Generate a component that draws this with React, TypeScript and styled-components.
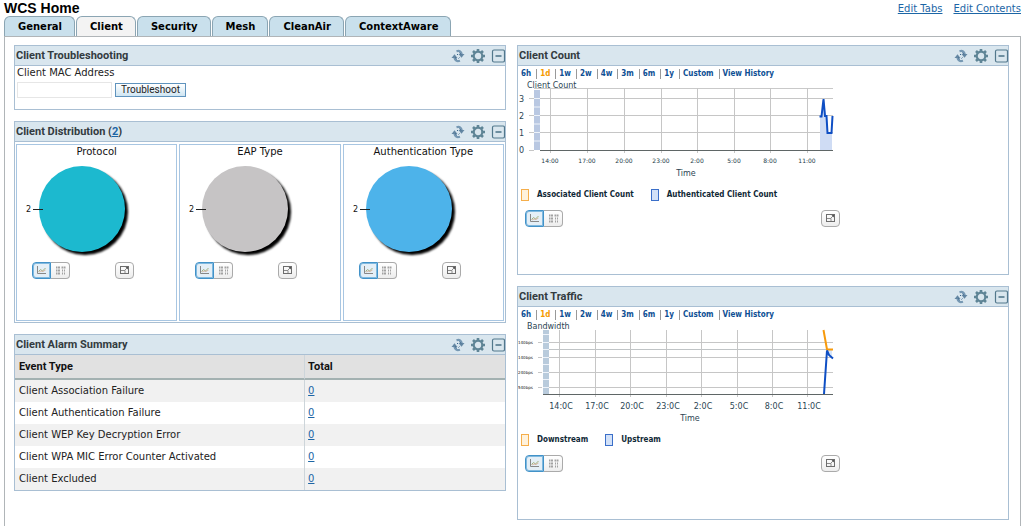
import React from "react";
import styled, { createGlobalStyle } from "styled-components";

const sans = '"DejaVu Sans", "Liberation Sans", sans-serif';
const heading = 'Roboto, "Liberation Sans", sans-serif';
const link = "#1c66a6";
const line = "#a9bfd3";

const GlobalStyle = createGlobalStyle`
  * { box-sizing: border-box; }
  body {
    margin: 0;
    background: #fff;
    color: #222;
    font-family: ${sans};
    font-size: 10px;
  }
  a { color: ${link}; }
  button { font: inherit; padding: 0; margin: 0; cursor: pointer; }
  svg { display: block; }
`;

const Page = styled.div`
  min-height: 100vh;
  display: flex;
  flex-direction: column;
  padding: 0 3px 0 4px;
`;

const TopBar = styled.header`
  display: flex;
  justify-content: space-between;
  height: 16px;
`;

const PageTitle = styled.h1`
  margin: 0;
  font: bold 14px/16px "Liberation Sans", sans-serif;
  color: #000;
`;

const TopLinks = styled.nav`
  display: flex;
  gap: 11px;
  line-height: 17px;
`;

const Tabs = styled.nav`
  display: flex;
  gap: 1px;
`;

const Tab = styled.button<{ $active?: boolean }>`
  height: 20px;
  padding: 0 12px 0 13px;
  border: 1px solid #8ba5b3;
  border-bottom: 0;
  border-radius: 6px 6px 0 0;
  background: ${(p) => (p.$active ? "#f3f3f3" : "#c9e0ec")};
  color: #000;
  font-weight: bold;
  line-height: 18px;
  white-space: nowrap;
`;

const Panel = styled.main`
  flex: 1;
  display: grid;
  grid-template-columns: 1fr 1fr;
  align-items: start;
  gap: 11px;
  padding: 8px 11px 6px 9px;
  border: 1px solid #b0b5b8;
  border-bottom: 0;
`;

const Column = styled.div`
  display: flex;
  flex-direction: column;
  gap: 11px;
  min-width: 0;
`;

const WidgetBox = styled.section`
  border: 1px solid ${line};
  background: #fff;
`;

const WidgetHeader = styled.div`
  display: flex;
  align-items: center;
  justify-content: space-between;
  height: 20px;
  padding: 0 0 0 1px;
  background: #d9e6ee;
  border-bottom: 1px solid ${line};
`;

const WidgetTitle = styled.h2`
  margin: 0;
  font: bold 11px/20px ${heading};
  color: #333b40;
`;

const Tools = styled.div`
  display: flex;
  gap: 6px;
`;

const ToolButton = styled.button`
  width: 14px;
  height: 14px;
  border: 0;
  background: none;
`;

const TroubleForm = styled.form`
  padding: 0 2px 12px;
`;

const FieldLabel = styled.label`
  display: block;
  line-height: 14px;
`;

const FieldRow = styled.div`
  display: flex;
  align-items: center;
  gap: 3px;
  height: 17px;
  padding-top: 2px;
`;

const MacInput = styled.input`
  width: 95px;
  height: 16px;
  border: 1px solid #e6e6e6;
  font: 10px ${sans};
`;

const SubmitButton = styled.button`
  width: 71px;
  height: 14px;
  border: 1px solid #5f93bd;
  background: linear-gradient(#fff, #cfe5f2);
  color: #222;
  font: 10px/12px ${heading};
`;

const PieGrid = styled.div`
  display: grid;
  grid-template-columns: repeat(3, 1fr);
  gap: 2px;
  padding: 2px 1px 1px;
`;

const PieCard = styled.div`
  height: 177px;
  border: 1px solid #a8c6e2;
  min-width: 0;
`;

const PieTitle = styled.h3`
  margin: 0;
  font: 10px/14px ${sans};
  text-align: center;
  color: #111;
`;

const PieControls = styled.div`
  display: flex;
  gap: 45px;
  padding-left: 15px;
`;

const Segment = styled.div`
  display: flex;
`;

const ViewButton = styled.button<{ $on?: boolean; $solo?: boolean }>`
  display: flex;
  align-items: center;
  justify-content: center;
  width: 19px;
  height: 17px;
  border: 1px solid ${(p) => (p.$on ? "#4292c8" : "#aaa")};
  box-shadow: ${(p) => (p.$on ? "inset 0 0 0 1px #80b9df" : "none")};
  border-radius: ${(p) => (p.$solo ? "4px" : p.$on ? "4px 0 0 4px" : "0 4px 4px 0")};
  border-left-width: ${(p) => (p.$on || p.$solo ? "1px" : "0")};
  background: ${(p) => (p.$on ? "#e4eff7" : "linear-gradient(#fff, #ededed)")};
`;

const AlarmTable = styled.table`
  width: 100%;
  border-collapse: separate;
  border-spacing: 0;
  table-layout: fixed;

  th, td {
    height: 22px;
    padding: 0 4px;
    text-align: left;
    line-height: 20px;
  }
  th {
    height: 25px;
    background: #e1e1e1;
    border-bottom: 2px solid #a3b1b1;
    font: bold 11px/20px ${heading};
    color: #111;
  }
  th:first-child { width: 59%; }
  th + th, td + td {
    padding-left: 3px;
    border-left: 1px solid #cdd5da;
  }
  tbody tr:nth-child(odd) { background: #f1f1f1; }
`;

const ChartBody = styled.div`
  padding-bottom: 47px;
`;

const Ranges = styled.nav`
  display: flex;
  align-items: center;
  height: 14px;
  padding-top: 2px;
`;

const RangeLink = styled.a<{ $active?: boolean }>`
  padding: 0 5px 0 3px;
  font: bold 8px/10px "DejaVu Sans Condensed", ${sans};
  color: ${(p) => (p.$active ? "#f59a00" : "#0d4f94")};
  text-decoration: none;
  & + & { border-left: 1px solid #999; }
`;

const Legend = styled.ul<{ $top: number }>`
  display: flex;
  gap: 17px;
  list-style: none;
  margin: ${(p) => p.$top}px 0 0;
  padding: 0 0 0 3px;
`;

const LegendItem = styled.li`
  display: flex;
  align-items: center;
  gap: 8px;
  font: bold 8px/12px "DejaVu Sans Condensed", ${sans};
  color: #102836;
`;

const Swatch = styled.span<{ $edge: string; $fill: string }>`
  width: 8px;
  height: 12px;
  border: 1px solid ${(p) => p.$edge};
  background: ${(p) => p.$fill};
`;

const ChartControls = styled.div`
  display: flex;
  justify-content: space-between;
  width: 322px;
  padding: 9px 0 0 7px;
`;

function RefreshIcon() {
  return (
    <svg width="14" height="14" viewBox="0 0 14 14" fill="none">
      <path d="M5.500 2.300Q10 .8 10.800 5.500" stroke="#7698b3" strokeWidth="2.200" />
      <path d="M7.500 5h6L10.500 8.800z" fill="#6487a3" />
      <path d="M9 11.700Q4.200 13.200 3.400 8.500" stroke="#7698b3" strokeWidth="2.200" />
      <path d="M.5 9h6L3.500 5.200z" fill="#6487a3" />
      <path d="M8.500 3.500l1.500 2M5.500 10.500L4.500 8.500M7 5l-1 1M7.500 9.500l1-1" stroke="#3d678c" />
    </svg>
  );
}

function GearIcon() {
  return (
    <svg width="14" height="14" viewBox="0 0 14 14" stroke="#5f8596" fill="none">
      <path d="M7 0v3M7 11v3M0 7h3M11 7h3M2 2l2.200 2.200M9.800 9.800L12 12M12 2L9.800 4.200M4.200 9.800L2 12" strokeWidth="2.600" />
      <circle cx="7" cy="7" r="4.300" strokeWidth="2.200" />
    </svg>
  );
}

function MinusIcon() {
  return (
    <svg width="14" height="14" viewBox="0 0 14 14" stroke="#52788c" fill="none">
      <rect x="1.500" y="1" width="12" height="12" rx="1.500" strokeWidth="1.200" />
      <path d="M4.500 7h6" strokeWidth="1.600" />
    </svg>
  );
}

function ChartIcon() {
  return (
    <svg width="11" height="9" viewBox="0 0 11 9" fill="none">
      <path d="M1.500 0v7.500H10" stroke="#888" />
      <path d="M2.500 5.500L4.500 3.500 6.500 5 9.500 2" stroke="#9fb27f" />
      <path d="M3 6l2-1 2 .5 2.500-1.500" stroke="#d5a990" strokeWidth=".8" />
    </svg>
  );
}

function GridIcon() {
  return (
    <svg width="11" height="9" viewBox="0 0 11 9" stroke="#a2a2a2" fill="none">
      <path d="M1 1.500h1.500M3 1.500h2M6.500 1.500h1.500M8.500 1.500h2M1 4.500h1.500M3 4.500h2M7 4.500h1M9 4.500h1M1 7.500h1.500M3 7.500h2M7 7.500h1M9 7.500h1" strokeWidth="2" />
    </svg>
  );
}

function ExpandIcon() {
  return (
    <svg width="11" height="9" viewBox="0 0 11 9" fill="none" stroke="#6d6d6d">
      <rect x="1.500" y=".5" width="8" height="7" />
      <path d="M2 4.500h4V7M6 4l2-2" stroke="#8a8a8a" />
      <path d="M6.500 1H9v2.500z" fill="#555" stroke="none" />
    </svg>
  );
}

function Widget({ title, children }: { title: React.ReactNode; children: React.ReactNode }) {
  return (
    <WidgetBox>
      <WidgetHeader>
        <WidgetTitle>{title}</WidgetTitle>
        <Tools>
          <ToolButton type="button" aria-label="Refresh"><RefreshIcon /></ToolButton>
          <ToolButton type="button" aria-label="Settings"><GearIcon /></ToolButton>
          <ToolButton type="button" aria-label="Collapse"><MinusIcon /></ToolButton>
        </Tools>
      </WidgetHeader>
      {children}
    </WidgetBox>
  );
}

function ViewControls() {
  return (
    <>
      <Segment>
        <ViewButton type="button" $on aria-label="Chart view"><ChartIcon /></ViewButton>
        <ViewButton type="button" aria-label="Table view"><GridIcon /></ViewButton>
      </Segment>
      <ViewButton type="button" $solo aria-label="Enlarge"><ExpandIcon /></ViewButton>
    </>
  );
}

function Pie({ title, color }: { title: string; color: string }) {
  const id = "shadow-" + color.slice(1);
  return (
    <PieCard>
      <PieTitle>{title}</PieTitle>
      <svg width="120" height="103" viewBox="0 0 120 103">
        <defs>
          <filter id={id} x="-10%" y="-10%" width="130%" height="130%">
            <feGaussianBlur stdDeviation="1.200" />
          </filter>
        </defs>
        <circle cx="68" cy="53" r="43" fill="#000" filter={`url(#${id})`} />
        <circle cx="65" cy="50" r="43" fill={color} />
        <path d="M16 50.500h10" stroke="#222" />
        <text x="9" y="53" fontSize="8" fill="#111">2</text>
      </svg>
      <PieControls><ViewControls /></PieControls>
    </PieCard>
  );
}

const ranges = ["6h", "1d", "1w", "2w", "4w", "3m", "6m", "1y", "Custom", "View History"];

function RangeBar() {
  return (
    <Ranges>
      {ranges.map((r) => (
        <RangeLink key={r} href="#" $active={r === "1d"}>{r}</RangeLink>
      ))}
    </Ranges>
  );
}

const countTicks: [number, string][] = [
  [32, "14:00"], [69, "17:00"], [106, "20:00"], [143, "23:00"],
  [179, "2:00"], [216, "5:00"], [252, "8:00"], [289, "11:00"],
];

function CountChart() {
  return (
    <svg width="322" height="98" viewBox="0 0 322 98">
      <rect x="16" y="10" width="6" height="60" fill="#b9c8e2" />
      <path d="M16 8.500H315" stroke="#c9c9c9" />
      {[18, 35, 52].map((y, i) => (
        <g key={y}>
          <path d={`M11 ${y + 0.5}h5M22 ${y + 0.5}H315`} stroke="#c6c6c6" />
          <path d={`M16 ${y + 0.5}h6M16 ${y + 9}h6`} stroke="#eef3fa" />
          <text x="1" y={y + 4} fontSize="8" fill="#2b4553">{3 - i}</text>
        </g>
      ))}
      <text x="1" y="73" fontSize="8" fill="#2b4553">0</text>
      {countTicks.map(([x, label]) => (
        <g key={label}>
          <path d={`M${x + 0.5} 8V73`} stroke="#c6c6c6" />
          <text x={x} y="83" fontSize="6" textAnchor="middle" fill="#223a48">{label}</text>
        </g>
      ))}
      <path d="M302 36h2l2-17 2 17h1l1 17h4v17h-12z" fill="#cfdcf4" />
      <path d="M11 70.500h5" stroke="#c6c6c6" />
      <path d="M22 70.500H315" stroke="#5f6666" />
      <path d="M301.500 36.500H303.500L305.500 19 307 36H308.500L309.500 53H313.500L314.500 36" fill="none" stroke="#0f4fc4" strokeWidth="2" />
      <text x="9" y="8" fontSize="8" fill="#2b4553">Client Count</text>
      <text x="168" y="96" fontSize="8" textAnchor="middle" fill="#2b4553">Time</text>
    </svg>
  );
}

const trafficTicks: [number, string][] = [
  [41, "14:0C"], [77, "17:0C"], [112, "20:0C"], [148, "23:0C"],
  [183, "2:0C"], [219, "5:0C"], [254, "8:0C"], [289, "11:0C"],
];

const trafficRows: [number, string][] = [[21, "140bps"], [36, "140bps"], [51, "240bps"], [66, "540bps"]];

function TrafficChart() {
  return (
    <svg width="322" height="101" viewBox="0 0 322 101">
      <rect x="25" y="9" width="6" height="65" fill="#b9cbdc" />
      <path d="M31 28.500H315" stroke="#c0c4c6" />
      {trafficRows.map(([y, label]) => (
        <g key={y}>
          <path d={`M20 ${y + 0.5}h4M31 ${y + 0.5}H315`} stroke="#c6c6c6" />
          <path d={`M25 ${y + 0.5}h6M25 ${y - 7.5}h6`} stroke="#eef3fa" />
          <text x="0" y={y + 2} fontSize="4" fill="#111">{label}</text>
        </g>
      ))}
      {trafficTicks.map(([x, label]) => (
        <g key={label}>
          <path d={`M${x + 0.5} 9V76`} stroke="#c6c6c6" />
          <text x={x + 2} y="88" fontSize="8" textAnchor="middle" fill="#2b4553">{label}</text>
        </g>
      ))}
      <path d="M25 73.500H315" stroke="#5f6666" />
      <path d="M309 29h5v8l-3-3z" fill="#d6e6fa" />
      <path d="M305.500 9L309 28.500H315" fill="none" stroke="#f79a0c" strokeWidth="2" />
      <path d="M306 73L309 29.500 311 34 315 37.500" fill="none" stroke="#0f4fc4" strokeWidth="2" />
      <text x="9" y="8" fontSize="8" fill="#2b4553">Bandwidth</text>
      <text x="172" y="100" fontSize="8" textAnchor="middle" fill="#2b4553">Time</text>
    </svg>
  );
}

function ChartLegend({ items, top }: { items: [string, string]; top: number }) {
  return (
    <Legend $top={top}>
      <LegendItem><Swatch $edge="#f5ae4b" $fill="#fff2dc" />{items[0]}</LegendItem>
      <LegendItem><Swatch $edge="#3b6fc9" $fill="#d2e1f8" />{items[1]}</LegendItem>
    </Legend>
  );
}

const events = [
  "Client Association Failure",
  "Client Authentication Failure",
  "Client WEP Key Decryption Error",
  "Client WPA MIC Error Counter Activated",
  "Client Excluded",
];

const tabs = ["General", "Client", "Security", "Mesh", "CleanAir", "ContextAware"];

export default function App() {
  return (
    <Page>
      <GlobalStyle />
      <TopBar>
        <PageTitle>WCS Home</PageTitle>
        <TopLinks>
          <a href="#">Edit Tabs</a>
          <a href="#">Edit Contents</a>
        </TopLinks>
      </TopBar>
      <Tabs>
        {tabs.map((t) => (
          <Tab key={t} type="button" $active={t === "Client"}>{t}</Tab>
        ))}
      </Tabs>
      <Panel>
        <Column>
          <Widget title="Client Troubleshooting">
            <TroubleForm>
              <FieldLabel htmlFor="mac">Client MAC Address</FieldLabel>
              <FieldRow>
                <MacInput id="mac" type="text" />
                <SubmitButton type="button">Troubleshoot</SubmitButton>
              </FieldRow>
            </TroubleForm>
          </Widget>
          <Widget title={<>Client Distribution (<a href="#">2</a>)</>}>
            <PieGrid>
              <Pie title="Protocol" color="#1cb9cf" />
              <Pie title="EAP Type" color="#c6c4c5" />
              <Pie title="Authentication Type" color="#4db3ea" />
            </PieGrid>
          </Widget>
          <Widget title="Client Alarm Summary">
            <AlarmTable>
              <thead>
                <tr><th scope="col">Event Type</th><th scope="col">Total</th></tr>
              </thead>
              <tbody>
                {events.map((e) => (
                  <tr key={e}><td>{e}</td><td><a href="#">0</a></td></tr>
                ))}
              </tbody>
            </AlarmTable>
          </Widget>
        </Column>
        <Column>
          <Widget title="Client Count">
            <ChartBody>
              <RangeBar />
              <CountChart />
              <ChartLegend items={["Associated Client Count", "Authenticated Client Count"]} top={11} />
              <ChartControls><ViewControls /></ChartControls>
            </ChartBody>
          </Widget>
          <Widget title="Client Traffic">
            <ChartBody>
              <RangeBar />
              <TrafficChart />
              <ChartLegend items={["Downstream", "Upstream"]} top={12} />
              <ChartControls><ViewControls /></ChartControls>
            </ChartBody>
          </Widget>
        </Column>
      </Panel>
    </Page>
  );
}
